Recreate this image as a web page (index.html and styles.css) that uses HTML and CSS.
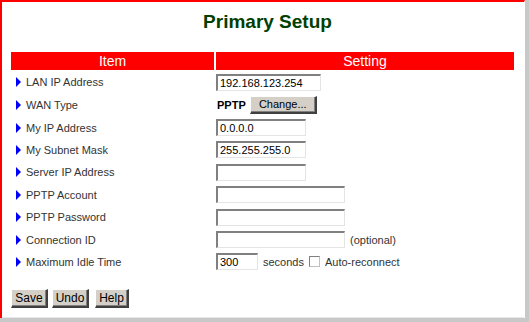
FILE: index.html
```html
<!DOCTYPE html>
<html>
  <head>
    <meta charset="UTF-8" />
    <title>Primary Setup</title>
    <link rel="stylesheet" href="styles.css">
  </head>
  <body>
    <div class="frame">
      <div class="page">
        <div class="title">Primary Setup</div>
        <form>
          <table class="setup">
            <tr>
              <th class="col-item">Item</th>
              <th>Setting</th>
            </tr>
            <tr>
              <td class="label"><span class="arrow"></span>LAN IP Address</td>
              <td><input type="text" class="w105" value="192.168.123.254" /></td>
            </tr>
            <tr class="tall">
              <td class="label"><span class="arrow"></span>WAN Type</td>
              <td><b class="wan">PPTP</b><button type="button" class="btn change">Change...</button></td>
            </tr>
            <tr>
              <td class="label"><span class="arrow"></span>My IP Address</td>
              <td><input type="text" class="w90" value="0.0.0.0" /></td>
            </tr>
            <tr>
              <td class="label"><span class="arrow"></span>My Subnet Mask</td>
              <td><input type="text" class="w90" value="255.255.255.0" /></td>
            </tr>
            <tr>
              <td class="label"><span class="arrow"></span>Server IP Address</td>
              <td><input type="text" class="w90" value="" /></td>
            </tr>
            <tr>
              <td class="label"><span class="arrow"></span>PPTP Account</td>
              <td><input type="text" class="w129" value="" /></td>
            </tr>
            <tr>
              <td class="label"><span class="arrow"></span>PPTP Password</td>
              <td><input type="password" class="w129" value="" /></td>
            </tr>
            <tr>
              <td class="label"><span class="arrow"></span>Connection ID</td>
              <td><input type="text" class="w129" value="" /><span class="note">(optional)</span></td>
            </tr>
            <tr>
              <td class="label"><span class="arrow"></span>Maximum Idle Time</td>
              <td class="idle"><input type="text" class="w42" value="300" /><span class="note">seconds</span><span class="check"></span><span class="auto">Auto-reconnect</span></td>
            </tr>
          </table>
          <div class="buttons">
            <button type="button" class="btn">Save</button>
            <button type="button" class="btn">Undo</button>
            <button type="button" class="btn help">Help</button>
          </div>
        </form>
      </div>
    </div>
  </body>
</html>
```

FILE: styles.css
```css
body {
  margin: 0;
  background-color: #ffffff;
  font-family: "Liberation Sans", Arial, sans-serif;
}
.frame {
  width: 525px;
  height: 318px;
  border-right: 4px solid #c8c8c8;
  border-bottom: 4px solid #c8c8c8;
  box-shadow: inset -1px -1px 0 #e8e8e8;
}
.page {
  box-sizing: border-box;
  height: 318px;
  border-top: 2px solid #ff0000;
  border-left: 2px solid #ff0000;
  border-right: 1px solid #ffffff;
  padding: 9px 0 0 7px;
}
.title {
  text-align: center;
  color: #004000;
  font-size: 19px;
  font-weight: bold;
  height: 39px;
  padding-left: 2px;
}
.setup {
  border-spacing: 2px;
  width: 507px;
  font-size: 11px;
}
.setup th {
  background-color: #ff0000;
  color: #ffffff;
  font-weight: normal;
  font-size: 14px;
  height: 18px;
  padding: 0;
  line-height: 18px;
}
.col-item {
  width: 203px;
}
.setup td {
  height: 20.4px;
  padding: 0;
  color: #333333;
  white-space: nowrap;
}
.setup tr.tall td {
  height: 21px;
}
.label {
  padding-left: 3px !important;
}
.arrow {
  display: inline-block;
  width: 0;
  height: 0;
  border-top: 5px solid transparent;
  border-bottom: 5px solid transparent;
  border-left: 5px solid #0000ff;
  margin: 0 5px 0 2px;
  vertical-align: -1px;
}
input {
  box-sizing: border-box;
  height: 17px;
  padding: 0 2px;
  font-family: "Liberation Sans", Arial, sans-serif;
  font-size: 11px;
  color: #000000;
  border-top: 2px solid #808080;
  border-left: 2px solid #808080;
  border-right: 1px solid #e4e4e4;
  border-bottom: 1px solid #e4e4e4;
  vertical-align: middle;
  margin: 0;
}
.w105 { width: 105px; }
.w90 { width: 90px; }
.w129 { width: 129px; }
.w42 { width: 42px; }
.wan {
  color: #000000;
  font-size: 11px;
  margin: 0 4px 0 1px;
  vertical-align: middle;
}
.btn {
  background-color: #d4d0c8;
  border-top: 1px solid #ffffff;
  border-left: 1px solid #ffffff;
  border-right: 2px solid #404040;
  border-bottom: 2px solid #404040;
  box-shadow: inset -1px -1px 0 #808080;
  font-family: "Liberation Sans", Arial, sans-serif;
  font-size: 12px;
  color: #000000;
  height: 19px;
  padding: 0 4px;
  margin: 0;
  vertical-align: middle;
}
.change {
  width: 67px;
  height: 18px;
  font-size: 11px;
}
.note {
  margin-left: 5px;
  vertical-align: middle;
}
.check {
  display: inline-block;
  box-sizing: border-box;
  width: 11px;
  height: 11px;
  border-top: 1px solid #808080;
  border-left: 1px solid #808080;
  border-right: 1px solid #c0c0c0;
  border-bottom: 1px solid #c0c0c0;
  margin-left: 5px;
  vertical-align: middle;
}
.auto {
  margin-left: 5px;
  vertical-align: middle;
}
.buttons {
  display: flex;
  gap: 4px;
  margin-top: 15px;
  padding-left: 2px;
}
.buttons .btn {
  width: 37px;
  padding: 0;
}
.buttons .help {
  width: 34px;
  margin-left: 2px;
}
```
